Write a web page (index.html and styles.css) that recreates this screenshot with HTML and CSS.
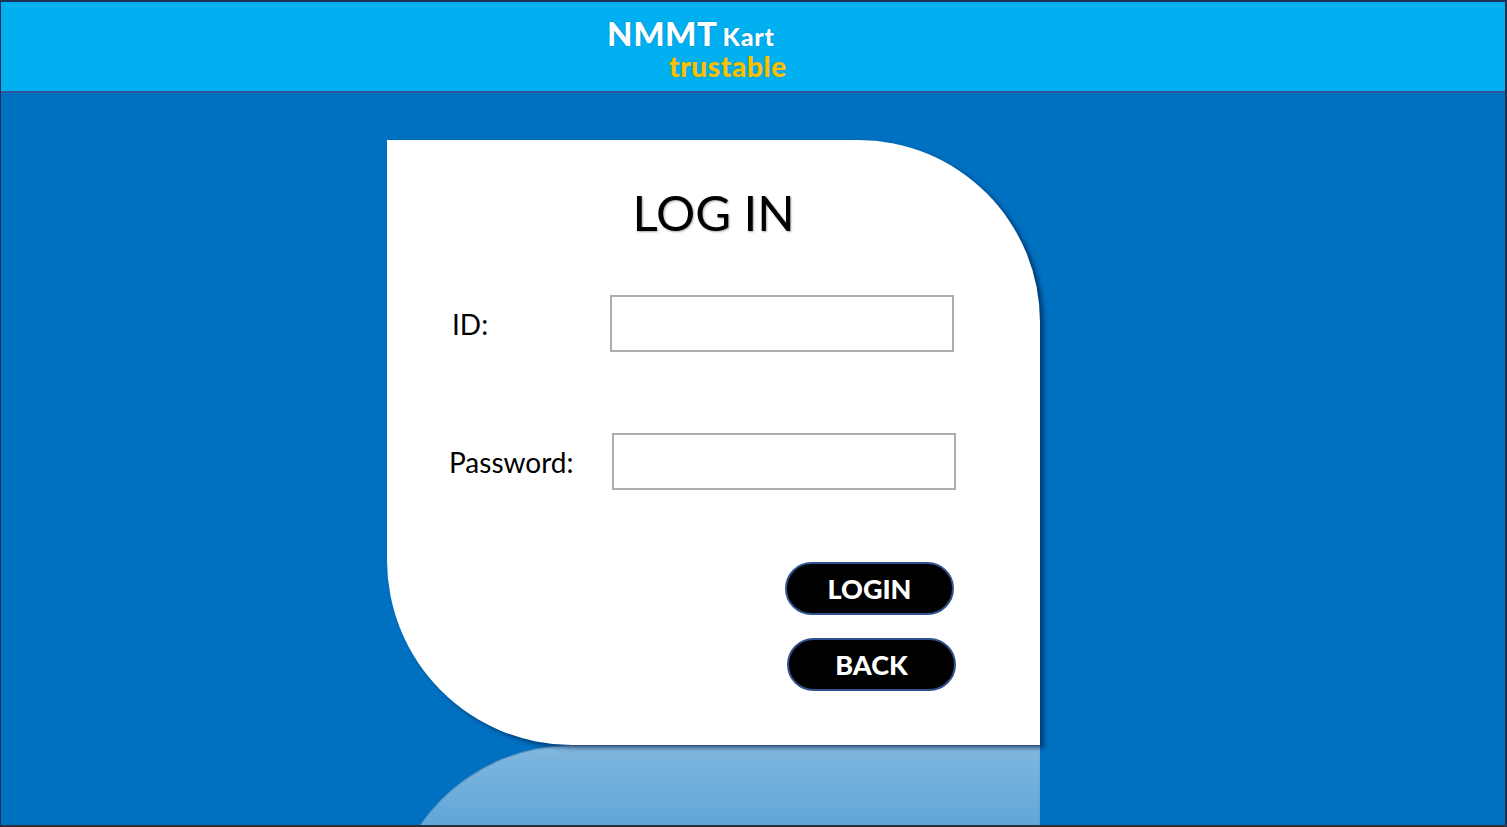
FILE: index.html
```html
<!DOCTYPE html>
<html>
<head>
<meta charset="utf-8">
<title>NMMT Kart - Log In</title>
<link rel="stylesheet" href="styles.css">
</head>
<body>
<div class="frame">
  <header class="header">
    <div class="brand">
      <div class="brand-top"><span class="nmmt">NMMT</span> <span class="kart">Kart</span></div>
      <div class="trust">trustable</div>
    </div>
  </header>
  <main class="stage">
    <div class="card-wrap">
      <section class="card">
        <h1 class="title">LOG IN</h1>
        <div class="row row-id">
          <label class="label">ID:</label>
          <div class="input"></div>
        </div>
        <div class="row row-pw">
          <label class="label">Password:</label>
          <div class="input"></div>
        </div>
        <div class="buttons">
          <button class="btn">LOGIN</button>
          <button class="btn btn-back">BACK</button>
        </div>
      </section>
      <div class="reflection"></div>
    </div>
  </main>
</div>
</body>
</html>
```

FILE: styles.css
```css
* { box-sizing: border-box; }
html, body { margin: 0; padding: 0; }
body {
  width: 1507px;
  height: 827px;
  overflow: hidden;
  font-family: Lato, "Open Sans", sans-serif;
  background: #0070c0;
}
.frame {
  width: 1507px;
  height: 827px;
  border-top: 2px solid #1f2f57;
  border-left: 1px solid #1f2f57;
  border-right: 2px solid #1f2f57;
  border-bottom: 2px solid #2b2f38;
  display: flex;
  flex-direction: column;
  overflow: hidden;
}
.header {
  height: 91px;
  flex: none;
  background: #00b0f0;
  border-bottom: 2px solid #2f5597;
  display: flex;
  padding-left: 606px;
}
.brand {
  padding-top: 17px;
  width: 210px;
  font-family: Lato, "Open Sans", sans-serif;
}
.brand-top {
  color: #fff;
  font-weight: 900;
  line-height: 28px;
  height: 28px;
  text-shadow: 0 0 2px rgba(0,60,120,0.35);
  white-space: nowrap;
}
.nmmt { font-size: 33px; letter-spacing: 0.6px; }
.kart { font-size: 25px; margin-left: 1px; letter-spacing: 0.8px; }
.trust {
  color: #ffc000;
  font-weight: 900;
  font-size: 28px;
  line-height: 28px;
  margin-left: 62px;
  margin-top: 5px;
  letter-spacing: 0.6px;
  text-shadow: 0 0 2px rgba(120,90,0,0.3);
}
.stage {
  flex: 1;
  overflow: hidden;
  padding-left: 386px;
  padding-top: 47px;
}
.card-wrap {
  width: 653px;
}
.card {
  height: 605px;
  background: #fff;
  border-top-right-radius: 182px;
  border-bottom-left-radius: 185px;
  box-shadow: 4px 3px 4px rgba(0,20,60,0.55);
  padding-top: 43px;
  display: flex;
  flex-direction: column;
  position: relative;
  z-index: 1;
}
.title {
  margin: 0;
  text-align: center;
  font-weight: 400;
  font-size: 49px;
  line-height: 58px;
  color: #000;
  text-shadow: 1px 1px 2px rgba(0,0,0,0.35);
}
.row {
  display: flex;
  align-items: center;
}
.row-id { margin-top: 54px; padding-left: 65px; }
.row-pw { margin-top: 81px; padding-left: 62px; }
.label {
  font-size: 28px;
  color: #000;
}
.row-id .label { width: 158px; }
.row-pw .label { width: 163px; }
.input {
  width: 344px;
  height: 57px;
  border: 2px solid #adadad;
  background: #fff;
}
.buttons {
  display: flex;
  flex-direction: column;
  align-items: flex-end;
  gap: 23px;
  margin-top: 72px;
  padding-right: 86px;
}
.btn {
  width: 169px;
  height: 53px;
  border-radius: 27px;
  background: #000;
  border: 2px solid #2f528f;
  color: #fff;
  font-family: Lato, "Open Sans", sans-serif;
  font-weight: 900;
  font-size: 27px;
  padding: 0;
}
.btn-back { margin-right: -2px; }
.reflection {
  height: 605px;
  border-top-left-radius: 185px;
  border-bottom-right-radius: 182px;
  background: linear-gradient(to bottom, rgba(255,255,255,0.5) 0px, rgba(255,255,255,0.38) 80px, rgba(255,255,255,0.1) 300px);
  box-shadow: inset 0 1px 1px rgba(0,40,90,0.35);
}
```
